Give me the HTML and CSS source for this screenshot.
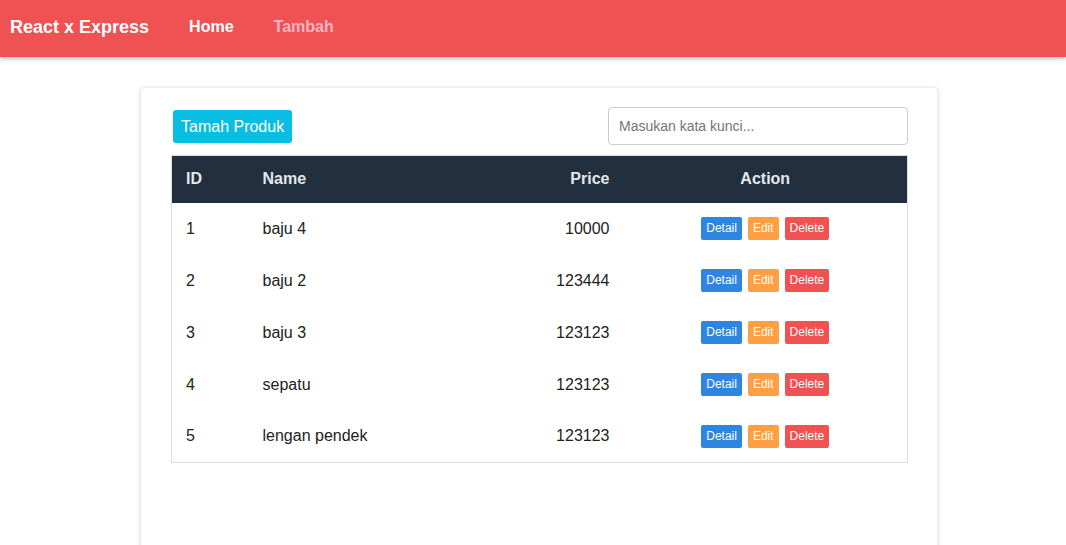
FILE: index.html
```html
<!DOCTYPE html>
<html>
<head>
<meta charset="utf-8">
<link rel="stylesheet" href="styles.css">
</head>
<body>
<nav class="navbar">
  <span class="brand">React x Express</span>
  <a class="nav-link active">Home</a>
  <a class="nav-link">Tambah</a>
</nav>
<main class="card">
  <div class="toolbar">
    <button class="btn-add">Tamah Produk</button>
    <input class="search" type="text" placeholder="Masukan kata kunci...">
  </div>
  <table class="table">
    <thead>
      <tr><th class="c-id">ID</th><th class="c-name">Name</th><th class="c-price">Price</th><th class="c-action">Action</th></tr>
    </thead>
    <tbody>
      <tr><td class="c-id">1</td><td class="c-name">baju 4</td><td class="c-price">10000</td><td class="c-action"><span class="btn blue">Detail</span><span class="btn orange">Edit</span><span class="btn red">Delete</span></td></tr>
      <tr><td class="c-id">2</td><td class="c-name">baju 2</td><td class="c-price">123444</td><td class="c-action"><span class="btn blue">Detail</span><span class="btn orange">Edit</span><span class="btn red">Delete</span></td></tr>
      <tr><td class="c-id">3</td><td class="c-name">baju 3</td><td class="c-price">123123</td><td class="c-action"><span class="btn blue">Detail</span><span class="btn orange">Edit</span><span class="btn red">Delete</span></td></tr>
      <tr><td class="c-id">4</td><td class="c-name">sepatu</td><td class="c-price">123123</td><td class="c-action"><span class="btn blue">Detail</span><span class="btn orange">Edit</span><span class="btn red">Delete</span></td></tr>
      <tr><td class="c-id">5</td><td class="c-name">lengan pendek</td><td class="c-price">123123</td><td class="c-action"><span class="btn blue">Detail</span><span class="btn orange">Edit</span><span class="btn red">Delete</span></td></tr>
    </tbody>
  </table>
</main>
</body>
</html>
```
FILE: styles.css
```css
* { box-sizing: border-box; }
html, body { margin: 0; padding: 0; }
body {
  font-family: "Liberation Sans", Arial, sans-serif;
  color: #222;
  background: #fff;
  overflow: hidden;
  height: 545px;
}
.navbar {
  height: 57px;
  background: #ee5253;
  display: flex;
  align-items: center;
  gap: 40px;
  padding: 0 0 3px 10px;
  box-shadow: 0 2px 4px rgba(0,0,0,0.25);
  position: relative;
  z-index: 1;
}
.brand {
  font-weight: bold;
  font-size: 18px;
  color: #fff;
}
.nav-link {
  font-weight: bold;
  font-size: 16px;
  color: #fbb6c0;
  text-decoration: none;
}
.nav-link.active { color: #fff; }
.card {
  margin: 30px 0 0 140px;
  width: 798px;
  height: 480px;
  border: 1px solid #eee;
  border-radius: 4px;
  box-shadow: 0 1px 4px rgba(0,0,0,0.15);
  padding: 19px 29px 0 30px;
}
.toolbar {
  display: flex;
  justify-content: space-between;
  align-items: center;
  margin-bottom: 10px;
}
.btn-add {
  margin-left: 2px;
  background: #0abde3;
  color: #fff;
  border: none;
  border-radius: 3px;
  font-family: inherit;
  font-size: 16px;
  line-height: 19px;
  padding: 7px 8px;
  height: 33px;
}
.search {
  width: 300px;
  height: 38px;
  border: 1px solid #ccc;
  border-radius: 4px;
  padding: 0 10px;
  font-family: inherit;
  font-size: 14px;
  color: #333;
}
.search::placeholder { color: #757575; }
.table {
  width: 737px;
  border-collapse: collapse;
  border: 1px solid #ddd;
  font-size: 16px;
}
.table th {
  background: #222f3e;
  color: #e4e7eb;
  font-weight: bold;
  height: 47px;
  padding: 0 14px;
}
.table td {
  height: 52px;
  padding: 0 14px;
}
.c-id { width: 77px; text-align: left; }
.c-name { width: 232px; text-align: left; }
.c-price { width: 143px; text-align: right; }
.c-action { text-align: center; }
.btn {
  display: inline-block;
  color: #fff;
  font-size: 12px;
  line-height: 15px;
  padding: 4px 5px;
  border-radius: 2px;
  margin: 0 3px;
  vertical-align: middle;
}
.blue { background: #2e86de; }
.orange { background: #ff9f43; }
.red { background: #ee5253; }
```
